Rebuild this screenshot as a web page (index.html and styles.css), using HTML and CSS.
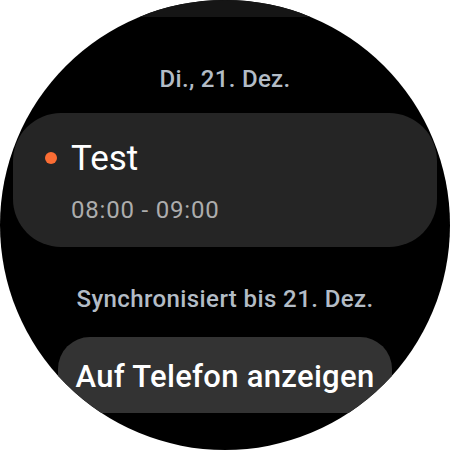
FILE: index.html
```html
<!DOCTYPE html>
<html lang="de">
<head>
<meta charset="utf-8">
<link rel="stylesheet" href="styles.css">
</head>
<body>
<div class="watch">
  <div class="band"></div>
  <div class="date">Di., 21. Dez.</div>
  <div class="card">
    <span class="dot"></span>
    <div class="event">
      <div class="title">Test</div>
      <div class="time">08:00 - 09:00</div>
    </div>
  </div>
  <div class="sync">Synchronisiert bis 21. Dez.</div>
  <div class="button">Auf Telefon anzeigen</div>
</div>
</body>
</html>
```
FILE: styles.css
```css
html, body {
  margin: 0;
  padding: 0;
  background: #ffffff;
}
.watch {
  width: 450px;
  height: 450px;
  border-radius: 50%;
  overflow: hidden;
  background: #000000;
  display: flex;
  flex-direction: column;
  align-items: center;
  font-family: Roboto, "Noto Sans", sans-serif;
}
.band {
  align-self: stretch;
  height: 17px;
  background: #151515;
  flex-shrink: 0;
}
.date {
  margin-top: 50px;
  font-size: 24px;
  line-height: 24px;
  font-weight: 500;
  letter-spacing: 0.3px;
  color: #b3bcc6;
}
.card {
  margin-top: 22px;
  width: 424px;
  height: 134px;
  box-sizing: border-box;
  border-radius: 48px;
  background: #252525;
  display: flex;
  padding: 28px 0 0 32px;
  flex-shrink: 0;
}
.dot {
  width: 12px;
  height: 12px;
  border-radius: 50%;
  background: #fb6d34;
  margin-top: 11px;
  margin-right: 14px;
  flex-shrink: 0;
}
.event {
  display: flex;
  flex-direction: column;
}
.title {
  font-size: 35px;
  line-height: 36px;
  color: #ffffff;
}
.time {
  margin-top: 21px;
  font-size: 24px;
  line-height: 24px;
  letter-spacing: 0.8px;
  color: #adadad;
}
.sync {
  margin-top: 40px;
  font-size: 24px;
  line-height: 24px;
  font-weight: 500;
  letter-spacing: 0.4px;
  color: #b3bcc6;
}
.button {
  margin-top: 26px;
  width: 334px;
  height: 76px;
  box-sizing: border-box;
  border-radius: 32px;
  background: #333333;
  padding-top: 24px;
  text-align: center;
  font-size: 31px;
  line-height: 31px;
  font-weight: 500;
  letter-spacing: 0.3px;
  color: #ffffff;
  flex-shrink: 0;
}
```
